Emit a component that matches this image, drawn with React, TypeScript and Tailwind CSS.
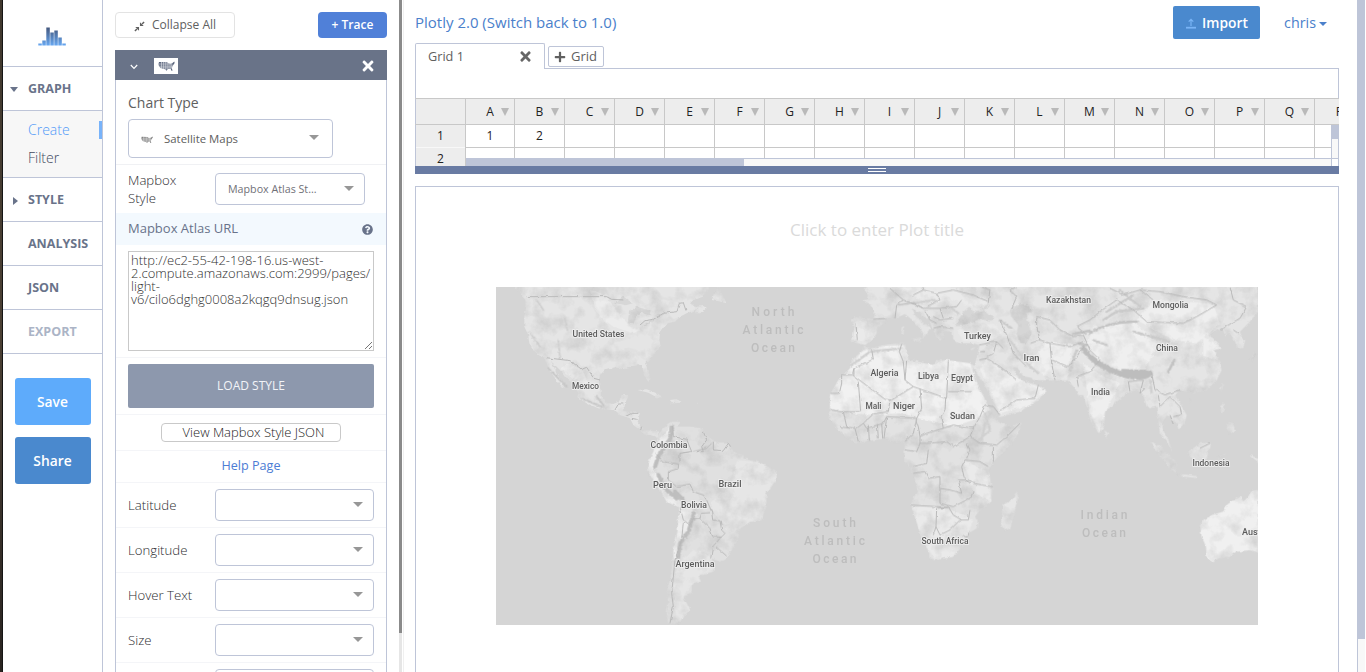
import React from "react";
import { FaPlus, FaTimes, FaQuestionCircle } from "react-icons/fa";

const line = "border-[#bec5d8]";

function UsaIcon({ className, color }: { className: string; color: string }) {
  return (
    <svg viewBox="0 0 48 30" className={className}>
      <path
        d="M3 2L26 3L29 6L35 7L41 5L46 1L47 5L42 12L39 19L41 27L38 27L36 22L28 22L24 27L20 23L8 20L3 14L1 8Z"
        fill={color}
      />
      <path d="M0 8H38M0 14H42M4 19H40M10 0V22M16 0V24M22 0V26M28 2V24M34 6V23M39 4V20" stroke="#fff" strokeWidth="1.9" opacity=".8" />
    </svg>
  );
}

function Caret({ className = "" }: { className?: string }) {
  return <span className={`h-0 w-0 shrink-0 border-x-[5px] border-t-[5px] border-x-transparent border-t-[#979797] ${className}`} />;
}

function NavRow({ label, arrow, muted }: { label: string; arrow?: "down" | "right"; muted?: boolean }) {
  return (
    <div className={`flex h-[44px] shrink-0 items-center border-b pt-[2px] ${line}`}>
      <span className="flex w-[25px] items-center pl-[7px]">
        {arrow === "down" && <i className="mb-px h-0 w-0 border-x-[4px] border-t-[5px] border-x-transparent border-t-[#69738a]" />}
        {arrow === "right" && <i className="ml-[3px] h-0 w-0 border-y-[4px] border-l-[5px] border-y-transparent border-l-[#69738a]" />}
      </span>
      <span className={`text-[12.5px] font-bold ${muted ? "text-[#abb4c6]" : "text-[#69738a]"}`}>{label}</span>
    </div>
  );
}

function Sidebar() {
  const bars = [2, 5, 18, 13, 15, 8, 2];
  return (
    <nav className={`flex w-[100px] shrink-0 flex-col border-r bg-white ${line}`}>
      <div className={`flex h-[67px] shrink-0 justify-center border-b pr-px pt-[27px] ${line}`}>
        <svg className="h-[19px] w-[28px]" viewBox="0 0 28 19">
          <defs>
            <linearGradient id="logo" gradientUnits="userSpaceOnUse" x1="0" y1="0" x2="0" y2="19">
              <stop offset="0" stopColor="#43557a" />
              <stop offset="1" stopColor="#68aaf5" />
            </linearGradient>
          </defs>
          {bars.map((h, i) => (
            <rect key={i} x={i * 4 + 0.3} y={18.5 - h} width="3.5" height={h} fill="url(#logo)" />
          ))}
        </svg>
      </div>
      <NavRow label="GRAPH" arrow="down" />
      <div className={`h-[67px] shrink-0 border-b bg-[#f7f7f7] pt-[9px] text-[14px] ${line}`}>
        <div className="flex h-[20px] items-center justify-between pl-[25px]">
          <span className="mb-[2px] font-light text-[#4f99f8]">Create</span>
          <i className="h-[18px] w-[3px] bg-[#78b3fa]" />
        </div>
        <div className="mt-[7px] flex h-[20px] items-center pl-[25px] font-light text-[#414a5e]">Filter</div>
      </div>
      <NavRow label="STYLE" arrow="right" />
      <NavRow label="ANALYSIS" />
      <NavRow label="JSON" />
      <NavRow label="EXPORT" muted />
      <div className="flex flex-col gap-3 pl-3 pr-[11px] pt-6 text-[13.8px] font-semibold text-white">
        <button className="h-[47px] rounded-[3px] bg-[#5eabfb] pr-px pt-[2px]">Save</button>
        <button className="h-[47px] rounded-[3px] bg-[#4a89ce] pr-px pt-[2px]">Share</button>
      </div>
    </nav>
  );
}

function FieldRow({ label }: { label: string }) {
  return (
    <div className="flex h-[45px] shrink-0 items-center border-b border-[#f4f5f8] pl-3 pr-3">
      <span className="w-[87px] pt-[2px] text-[13.2px] font-light text-[#2c2c31]">{label}</span>
      <div className={`flex h-[32px] flex-1 items-center justify-end rounded-[4px] border pr-[10px] ${line}`}>
        <Caret className="mb-[2px]" />
      </div>
    </div>
  );
}

function TracePanel() {
  return (
    <div className="flex h-full w-[296px] shrink-0 flex-col overflow-hidden pl-3 pr-[12px] pt-3">
      <div className="flex w-[272px] shrink-0 justify-between">
        <button className="flex h-[26px] w-[120px] items-center gap-[7px] rounded-[4px] border border-[#e3e3e3] pl-[18px] text-[12px] text-[#606060]">
          <svg viewBox="0 0 12 12" className="mt-[2px] h-[11px] w-[11px]" fill="#606060" stroke="#606060">
            <path d="M1 11L3.2 8.8M11 1L8.8 3.2" strokeWidth="1.6" />
            <path d="M1.4 6.5H5.5V10.6ZM10.6 5.5H6.5V1.4Z" stroke="none" />
          </svg>
          Collapse All
        </button>
        <button className="h-[26px] w-[69px] rounded-[4px] bg-[#5080d8] text-[12px] font-semibold text-white">+ Trace</button>
      </div>
      <div className="mt-3 flex h-[30px] w-[272px] shrink-0 items-center bg-[#697388] pl-[15px] pr-[11px]">
        <svg viewBox="0 0 8 6" className="mt-[4px] h-[6px] w-[8px]" fill="none" stroke="#fff" strokeWidth="1.2">
          <path d="M.8 1L4 4.4L7.2 1" />
        </svg>
        <span className="ml-[16px] mt-[2px] flex h-[16px] w-[24px] items-center justify-center bg-white">
          <UsaIcon className="h-[11px] w-[17px]" color="#59647c" />
        </span>
        <FaTimes className="ml-auto mt-[2px] h-[16px] w-[16px] text-white" />
      </div>
      <div className={`flex h-[600px] w-[272px] shrink-0 flex-col border-x ${line}`}>
        <div className="h-[85px] shrink-0 border-b border-[#f0f1f4] pl-3">
          <div className="pt-[13px] text-[14px] leading-[20px] text-[#606060]">Chart Type</div>
          <div className={`mt-[6px] flex h-[39px] w-[205px] items-center rounded-[4px] border pl-[12px] pr-[13px] text-[11.4px] text-[#606060] ${line}`}>
            <UsaIcon className="mt-[2px] h-[8px] w-[12px]" color="#777" />
            <span className="ml-[11px] mt-px">Satellite Maps</span>
            <Caret className="mb-[3px] ml-auto" />
          </div>
        </div>
        <div className="flex h-[48px] shrink-0 items-center pl-3">
          <span className="w-[87px] text-[13.2px] font-light leading-[18px] text-[#2c2c31]">Mapbox<br />Style</span>
          <div className={`flex h-[32px] w-[150px] items-center rounded-[4px] border pl-3 pr-[10px] text-[10.7px] text-[#707077] ${line}`}>
            Mapbox Atlas St...
            <Caret className="mb-px ml-auto" />
          </div>
        </div>
        <div className="flex h-[32px] shrink-0 items-center justify-between bg-[#f3f9fe] pl-3 pr-[13px] text-[13px] text-[#69738a]">
          Mapbox Atlas URL
          <FaQuestionCircle className="mt-px h-[11px] w-[11px]" />
        </div>
        <div className="h-[113px] shrink-0 border-b border-[#f4f5f8] px-3 pt-[6px]">
          <div className="relative h-[100px] border border-[#c9c9c9] px-[2px] pt-[2px] text-[13px] font-light leading-[13px] text-[#303030]">
            http://ec2-55-42-198-16.us-west-<br />
            2.compute.amazonaws.com:2999/pages/<br />
            light-<br />
            v6/cilo6dghg0008a2kqgq9dnsug.json
            <svg className="absolute bottom-0 right-0 h-[9px] w-[9px]" viewBox="0 0 9 9" stroke="#666" strokeWidth=".9">
              <path d="M1 8L8 1M5 8L8 5" />
            </svg>
          </div>
        </div>
        <div className="h-[57px] shrink-0 border-b border-[#f4f5f8] px-3 pt-[6px]">
          <button className="h-[44px] w-full rounded-[2px] bg-[#8d98ad] text-[12px] text-[#f2f4f8]">LOAD STYLE</button>
        </div>
        <div className="flex h-[36px] shrink-0 items-center justify-center border-b border-[#f4f5f8]">
          <button className="h-[19px] w-[180px] rounded-[4px] border border-[#c9c9c9] pl-[5px] text-[13px] font-light leading-[17px] text-[#222]">
            View Mapbox Style JSON
          </button>
        </div>
        <div className="flex h-[32px] shrink-0 items-center justify-center border-b border-[#f4f5f8] text-[12.6px] text-[#4c7cd4]">Help Page</div>
        <FieldRow label="Latitude" />
        <FieldRow label="Longitude" />
        <FieldRow label="Hover Text" />
        <FieldRow label="Size" />
        <FieldRow label="" />
      </div>
    </div>
  );
}

const columns = "ABCDEFGHIJKLMNOPQR".split("");

function DataGrid() {
  return (
    <section className="shrink-0">
      <div className="flex h-[26px] items-end">
        <div className={`flex h-[26px] w-[130px] items-center justify-between rounded-t-[2px] border-x border-t pl-3 pr-[11px] text-[12.7px] text-[#606060] ${line}`}>
          <span className="mt-px">Grid 1</span>
          <FaTimes className="h-[15px] w-[15px] text-[#666]" />
        </div>
        <div className={`flex h-full flex-1 border-b pl-[3px] pt-[3px] ${line}`}>
          <div className={`flex h-[21px] w-[56px] items-center gap-[5px] rounded-[2px] border pl-[5px] text-[13px] text-[#606060] ${line}`}>
            <FaPlus className="h-[12px] w-[12px]" />
            Grid
          </div>
        </div>
      </div>
      <div className={`h-[29px] border-x ${line}`} />
      <div className="flex h-[27px] overflow-hidden border-y border-[#c8c8c8] bg-[#ededed] text-[12px] text-[#222]">
        <span className={`w-[51px] shrink-0 border-l border-r border-r-[#c8c8c8] border-l-[#bec5d8]`} />
        {columns.map((c, i) => (
          <span key={c} className={`relative flex shrink-0 items-center justify-center border-r border-[#c8c8c8] ${i === 0 ? "w-[49px]" : "w-[50px]"}`}>
            {c}
            <i className="absolute right-[5px] top-[9px] h-0 w-0 border-x-[4px] border-t-[8px] border-x-transparent border-t-[#b9b9b9]" />
          </span>
        ))}
      </div>
      <div className={`flex h-[41px] border-x text-[12px] text-[#222] ${line}`}>
        <div className="flex w-[50px] shrink-0 flex-col border-r border-[#c8c8c8] bg-[#ededed] text-center">
          <span className="h-[23px] border-b border-[#f8f8f8] leading-[22px]">1</span>
          <span className="h-[18px] overflow-hidden leading-[22px]">2</span>
        </div>
        <div className="flex min-w-0 flex-1 flex-col overflow-hidden">
          <div className="flex h-[23px] shrink-0 border-b border-[#c8c8c8]">
            {columns.map((c, i) => (
              <span key={c} className={`shrink-0 border-r border-[#c8c8c8] text-center leading-[22px] ${i === 0 ? "w-[49px]" : "w-[50px]"}`}>
                {i === 0 ? "1" : i === 1 ? "2" : ""}
              </span>
            ))}
          </div>
          <div className="flex h-[10px] shrink-0">
            {columns.map((c, i) => (
              <span key={c} className={`shrink-0 border-r border-[#c8c8c8] ${i === 0 ? "w-[49px]" : "w-[50px]"}`} />
            ))}
          </div>
          <div className={`h-[8px] border-t bg-[#f8f8f8] ${line}`}>
            <div className="h-[7px] w-[278px] bg-[#bec5d8]" />
          </div>
        </div>
        <div className={`flex w-[7px] shrink-0 flex-col border-l bg-[#f8f8f8] ${line}`}>
          <div className="h-[14px] bg-[#bec5d8]" />
          <div className={`h-[20px] border-b ${line}`} />
          <div className="flex-1 bg-white" />
        </div>
      </div>
      <div className="flex h-[8px] flex-col items-center justify-center gap-[2px] bg-[#697ba3]">
        <i className="h-px w-[18px] bg-white" />
        <i className="h-px w-[18px] bg-white" />
      </div>
    </section>
  );
}

const labels: [string, number, number, number][] = [
  ["United States", 598.5, 337, 52],
  ["Mexico", 585.5, 389, 27],
  ["Colombia", 669, 448, 37],
  ["Peru", 662.5, 488, 19],
  ["Brazil", 730, 486.5, 23],
  ["Bolivia", 694, 508, 26],
  ["Argentina", 695, 567, 39],
  ["Algeria", 884.5, 376, 28],
  ["Libya", 928.5, 379, 21],
  ["Egypt", 962, 381, 22],
  ["Mali", 873.5, 409, 16],
  ["Niger", 904, 409, 22],
  ["Sudan", 962.5, 419.3, 25],
  ["Turkey", 977.5, 338.5, 27],
  ["Iran", 1031.5, 361, 16],
  ["Kazakhstan", 1068.5, 302.5, 45],
  ["Mongolia", 1170.5, 308, 36],
  ["China", 1167, 351, 22],
  ["India", 1100.5, 394.5, 19],
  ["Indonesia", 1211, 466, 37],
  ["South Africa", 945, 543.5, 47],
  ["Australia", 1260, 535, 36],
];

const oceans: [string, number, number, number][] = [
  ["North", 773, 315.5, 43],
  ["Atlantic", 773, 333.5, 61],
  ["Ocean", 773, 351.5, 44],
  ["South", 834.5, 527, 43],
  ["Atlantic", 834.5, 545, 61],
  ["Ocean", 834.5, 563, 44],
  ["Indian", 1104, 519, 47],
  ["Ocean", 1104, 537, 44],
];

function WorldMap() {
  return (
    <svg className="block h-[338px] w-[762px] bg-[#d5d5d5]" viewBox="496 287 762 338">
      <defs>
        <filter id="coast" x="-5%" y="-5%" width="110%" height="110%" colorInterpolationFilters="sRGB">
          <feTurbulence type="fractalNoise" baseFrequency=".22" numOctaves="2" seed="4" result="n" />
          <feDisplacementMap in="SourceGraphic" in2="n" scale="3.5" xChannelSelector="R" yChannelSelector="G" result="land" />
          <feTurbulence type="fractalNoise" baseFrequency=".06" numOctaves="4" seed="12" />
          <feColorMatrix values="0 0 0 0 .4  0 0 0 0 .4  0 0 0 0 .4  .4 0 0 0 -.17" />
          <feComposite in2="land" operator="in" result="shade" />
          <feMerge>
            <feMergeNode in="land" />
            <feMergeNode in="shade" />
          </feMerge>
        </filter>
        <filter id="borders" x="-5%" y="-5%" width="110%" height="110%" colorInterpolationFilters="sRGB">
          <feTurbulence type="fractalNoise" baseFrequency=".2" numOctaves="1" seed="4" result="n" />
          <feDisplacementMap in="SourceGraphic" in2="n" scale="3" xChannelSelector="R" yChannelSelector="G" />
        </filter>
        <filter id="soft" x="-20%" y="-20%" width="140%" height="140%">
          <feGaussianBlur stdDeviation="2" />
        </filter>
        <filter id="relief" x="-10%" y="-10%" width="120%" height="120%" colorInterpolationFilters="sRGB">
          <feTurbulence type="fractalNoise" baseFrequency=".18" numOctaves="2" seed="9" result="n" />
          <feDisplacementMap in="SourceGraphic" in2="n" scale="9" xChannelSelector="R" yChannelSelector="G" />
        </filter>
      </defs>

      <g filter="url(#coast)">
        <g transform="translate(490 280) scale(.33333)" fill="#e5e5e5">
          <path d="M66 10L85 35L105 55L108 85L103 110L103 140L115 165L118 190L135 215L160 230L170 250L180 275L200 300L215 320L224 324L215 305L200 280L190 255L182 243L195 255L215 275L235 300L250 310L265 340L262 352L290 370L325 385L345 390L375 390L390 405L420 415L430 435L450 450L462 460L480 465L500 470L508 455L485 452L460 450L448 435L440 425L450 400L425 397L403 393L400 375L410 360L417 345L395 345L385 365L370 372L350 370L335 345L328 315L327 300L330 285L345 270L375 262L400 268L425 258L455 255L460 270L462 285L475 305L480 290L475 270L465 250L480 235L500 215L512 200L508 180L510 160L520 145L530 130L555 125L570 110L590 100L610 93L625 83L615 100L630 100L650 85L640 78L615 80L600 70L610 60L635 50L655 30L658 10Z" />
          <path d="M665 60L672 40L685 12L700 50L710 70L690 65ZM443 330L470 328L500 340L520 352L500 352L475 338ZM540 360L560 358L578 368L545 370ZM617 368L625 369L620 372Z" />
          <path d="M300 30L350 45L370 80L420 140L450 150L430 160L370 140L330 110L310 70ZM210 265L240 250L280 275L300 320L280 310L240 290Z" fill="#ececec" />
          <path d="M373 68L400 50L428 70L408 76ZM430 132L413 130L417 95L440 80L482 92L478 106L452 98L440 108ZM455 138L490 117L494 122L465 136ZM495 110L525 98L520 106Z" fill="#d7d7d7" />
        </g>
        <g transform="translate(490 450) scale(.33333)" fill="#e0e0e0">
          <path d="M470 60L478 25L487 10L497 -20L505 -45L520 -65L545 -84L568 -85L562 -70L600 -70L635 -65L650 -45L680 -20L715 -20L730 5L760 15L760 25L800 35L835 50L858 65L860 85L845 110L828 130L828 170L815 210L780 215L750 235L745 265L725 300L705 330L690 335L665 325L675 350L670 365L640 375L625 375L632 395L605 405L605 430L580 440L590 465L600 480L580 495L565 530L535 530L530 490L535 460L530 420L540 390L545 350L550 300L565 250L565 200L570 170L540 155L510 125L495 95L475 75Z" />
          <path d="M740 30L800 35L858 65L860 85L828 130L828 170L815 210L780 215L750 235L720 250L700 220L670 190L660 160L700 130L730 90ZM610 300L660 320L675 360L625 375L632 395L605 405L580 440L600 480L560 520L550 420L560 340Z" fill="#e6e6e6" />
          <path d="M470 60L482 25L500 -20L540 -70L530 -30L500 20L490 60L520 110L575 150L620 190L600 240L570 290L555 340L550 300L562 250L565 200L568 172L530 155L495 95Z" fill="#eeeeee" />
        </g>
        <g transform="translate(740 280) scale(.33333)" fill="#e2e2e2">
          <path d="M368 200L390 205L430 195L480 190L495 190L500 215L498 235L530 240L555 255L580 255L590 240L620 240L655 248L690 250L705 258L695 275L710 310L730 345L745 380L765 405L780 430L810 437L845 428L840 450L820 485L795 512L760 545L745 570L755 620L755 665L720 690L705 710L713 725L710 745L685 760L675 790L640 830L585 840L568 835L568 820L545 775L535 725L512 675L532 630L520 580L492 540L495 505L490 485L465 490L440 475L400 480L350 490L310 465L285 435L265 405L275 385L270 345L295 300L330 265L335 240L365 215Z" />
          <path d="M365 215L430 200L495 195L505 240L580 255L620 240L690 250L715 320L750 390L700 420L640 440L560 420L480 400L400 405L330 400L270 385L270 345L295 300L330 265Z" fill="#f1f1f1" />
          <path d="M515 680L590 680L640 690L700 720L685 760L640 830L585 840L545 775ZM670 540L740 575L755 665L700 640Z" fill="#eaeaea" />
          <path d="M830 633L835 650L825 690L810 745L795 752L783 735L788 675L815 660Z" fill="#e7e7e7" />
          <path d="M366 62L385 58L382 40L372 28L395 10L1554 10L1554 95L1525 130L1495 160L1515 180L1510 205L1495 205L1480 175L1470 160L1455 165L1450 150L1435 148L1405 165L1420 175L1445 205L1420 210L1435 240L1445 270L1430 300L1400 330L1360 340L1320 330L1305 345L1320 370L1340 405L1335 425L1315 450L1310 430L1280 405L1265 430L1270 450L1285 480L1295 515L1280 480L1260 460L1255 420L1250 380L1230 385L1220 380L1210 345L1190 330L1165 335L1125 370L1095 395L1092 440L1078 460L1055 430L1040 380L1030 345L1015 345L1005 325L985 302L940 302L895 300L870 293L850 288L832 262L818 262L830 285L850 303L885 312L918 330L900 357L870 375L840 395L780 412L765 375L745 335L725 300L703 265L708 240L715 215L718 195L700 190L660 190L640 178L638 155L608 152L612 172L600 182L588 170L578 145L565 120L540 98L515 85L525 105L545 125L572 142L560 160L548 178L550 160L540 145L515 118L495 102L465 115L440 115L435 127L410 145L410 160L395 180L375 195L355 190L335 185L345 140L335 120L345 112L400 118L405 100L395 75Z" fill="#e5e5e5" />
          <path d="M510 176L543 176L538 188ZM485 142L492 138L491 165L484 162ZM620 205L640 207M690 207L708 202L695 211Z" />
          <path d="M790 270L850 303L918 330L870 375L780 400L750 330L720 270L740 235ZM910 190L1000 190L980 300L940 300L870 260ZM1060 140L1180 125L1260 190L1210 270L1100 270L1040 200ZM1030 250L1090 290L1140 310L1095 395L1078 455L1050 400ZM1240 60L1420 70L1440 130L1370 190L1300 180L1190 120ZM1390 170L1445 205L1420 210L1435 240L1390 230Z" fill="#efefef" />
          <path d="M480 25L640 10L720 30L750 70L690 80L640 60L560 70ZM345 120L400 130L380 185L340 180ZM650 150L760 130L790 160L750 185L670 185Z" fill="#eaeaea" />
          <path d="M645 138L655 120L668 98L688 80L700 95L720 96L735 88L740 100L762 112L755 122L715 118L690 132L665 138ZM720 90L738 75L750 72L738 88ZM815 85L840 72L870 75L876 95L860 100L865 130L875 160L860 190L840 190L830 160L835 135L815 110L810 95Z" fill="#d6d6d6" />
          <path d="M1093 450L1105 460L1100 473ZM1345 360L1356 355L1350 368ZM1440 328L1450 310L1446 330ZM1440 380L1450 370L1455 390L1445 400ZM1465 425L1480 430L1485 450L1470 465L1460 445ZM1525 240L1540 225L1545 218L1550 223L1535 245Z" />
          <path d="M1230 485L1255 495L1280 520L1310 550L1310 580L1285 560L1260 525ZM1310 580L1370 588L1370 594L1315 588ZM1345 515L1380 490L1410 488L1405 520L1400 540L1370 545L1350 530ZM1435 525L1460 522L1440 530L1450 545L1440 560L1434 545ZM1530 525L1560 535L1555 550Z" fill="#e4e4e4" />
          <path d="M1554 630L1530 635L1525 650L1510 665L1500 650L1480 660L1460 675L1450 695L1415 705L1390 720L1380 735L1385 770L1398 800L1400 835L1415 845L1435 835L1470 830L1490 815L1530 810L1560 820Z" fill="#f0f0f0" />
        </g>
      </g>

      <g transform="translate(740 280) scale(.33333)" filter="url(#relief)" fill="none" strokeLinecap="round">
        <g filter="url(#soft)">
          <path d="M1030 205Q1060 250 1130 277T1230 280M1150 275L1215 278" stroke="#bdbdbd" strokeWidth="16" />
          <path d="M1050 160Q1100 125 1190 125M1000 162L1050 152M1285 275L1303 240M1015 190L1040 195" stroke="#c3c3c3" strokeWidth="8" />
          <path d="M1090 120L1130 95L1210 85M1100 95L1180 45M1180 155L1290 185M1060 180L1100 195M780 120L815 145M990 270L1010 210M1140 30L1200 80" stroke="#cacaca" strokeWidth="7" />
          <path d="M810 180L860 250L895 280M735 400L750 450L715 480M735 430L725 480M335 255L390 215L485 205M520 70L585 60M635 85L655 100M1230 300L1235 340" stroke="#d0d0d0" strokeWidth="7" />
          <path d="M-525 115L-518 150M-632 155L-600 200M-545 180L-540 235M-610 60L-590 90" stroke="#cecece" strokeWidth="5" />
          <path d="M-575 265L-520 320M-475 355L-415 380M-430 350L-410 375" stroke="#c8c8c8" strokeWidth="6" />
          <path d="M-205 440L-208 475L-245 530L-255 560M-245 585L-225 625L-190 655M-195 635L-170 660M-138 700L-155 755L-180 790L-185 830" stroke="#bebebe" strokeWidth="12" />
        </g>
      </g>

      <g filter="url(#borders)" fill="none" stroke="#b7b7b7" strokeWidth="2.8" strokeLinejoin="round">
        <g transform="translate(490 280) scale(.33333)">
          <path d="M110 50H350L365 58L400 60M450 135L465 122L490 118L520 100L560 95L568 70L580 68L588 92M168 233L240 242L275 268L290 262L312 295L330 300M375 390L385 372L400 372M405 410L425 400L445 400M425 415L440 418M452 450L455 440" />
          <path d="M547 430L550 470L590 478L605 515L570 520L570 545M640 455L650 480L635 500L640 515L610 515M670 485L670 510L700 512L715 490L722 500" />
        </g>
        <g transform="translate(490 450) scale(.33333)">
          <path d="M497 10L520 35L565 42L565 55L535 65L535 90L560 110L600 102L610 125L640 135L650 150L665 185L668 210L690 212L695 240L705 250L690 265L668 290L662 325M570 170L580 210L600 225L610 205L630 205L635 190L660 188M630 205L660 235L668 260L695 262M678 290L710 318M580 215L575 270L555 330L550 380L545 430L550 470L540 520M610 5L650 -5L665 -20" />
        </g>
        <g transform="translate(740 280) scale(.33333)">
          <path d="M395 208L400 238L342 265L338 285L435 358L455 360L520 320L495 300L490 245L478 215L485 192M500 240L495 300M520 320L620 355L625 240M625 335H695M340 285H305V310L298 340H272M342 265V285M355 305L362 395L300 395L275 390M450 360L445 395L400 402L370 430L380 445L430 430L440 410L530 415L545 385L540 325M440 412L432 475M530 415L520 460L495 485M617 355L615 390L603 410L610 445L560 460L540 470L535 440L528 420M610 445L640 435L700 445L720 410L735 375L760 380L780 405M700 445L690 470L720 490L770 495L800 470L840 430M690 470L640 500L620 485L560 490L540 490L540 470M310 395L320 440L345 445L355 485M370 430L350 445M385 435L388 482M412 432L415 475M425 432L428 475M300 440L330 445M495 510L530 515L540 490M520 580L555 575L565 595L600 590L600 625L630 630L665 640L655 600L685 600L700 610L755 620M600 625V670L640 680L690 655L700 635M512 675L625 682L590 685L588 740L580 765M588 740L600 765L630 750L660 720L685 720L690 690M625 680L640 705L665 720M675 540L665 560L672 590L690 610M675 540L720 545L745 560M565 510L560 550L520 560M680 490L690 510L680 535M760 500V545M680 755A8 8 0 1 1 670 765M640 790L655 780" />
          <path d="M440 115L400 118M348 130L352 180M465 115L470 75L490 60L450 25M490 60L530 75L550 85L600 85L650 80L665 60M520 45L550 30L590 40L600 60L560 80M550 30L545 21M590 40L640 30L700 45L745 65L750 30L725 21M580 110L600 120L640 115M555 92L570 120L590 130M580 145L600 140L640 145M600 85L610 115M475 75L520 68L550 85M718 195L770 185L790 205M718 240L740 235L780 260L830 300M718 215L735 215M770 185L760 220L735 235M780 392L830 360L885 355L895 315M780 120L800 165L820 220L860 260M872 190L900 180L930 190L935 250L945 300M900 180L890 140V110L930 120L960 150L1000 170L1030 165L1050 210L1080 240L1050 275L1010 290L1015 320M930 190L990 200L1030 185M935 240L985 260L1010 230L1030 200M815 85L830 50L810 30L830 21M1110 25L1150 45L1200 30L1240 60M1200 30L1260 35L1330 50L1400 60L1430 75L1370 110L1330 130L1220 125L1180 90L1130 60L1080 95L1050 120L1010 140L1040 165M1165 305L1170 335M1165 305L1210 300L1200 340L1215 325M1235 280L1245 330L1275 345L1320 330M1255 345L1260 380L1290 350L1320 380L1325 405L1300 410M1290 405L1300 430M1380 505L1410 490M1440 150L1500 115L1520 80L1480 60L1470 21M1495 160L1480 150" />
        </g>
      </g>

      <g fontFamily="'Roboto', sans-serif" textAnchor="middle">
        {oceans.map(([t, x, y, w], i) => (
          <text key={i} x={x} y={y} fontSize="12" fontWeight="500" fill="#bdbdbd" textLength={w}>{t}</text>
        ))}
        {labels.map(([t, x, y, w]) => (
          <text key={t} x={x} y={y} fontSize="9.3" fontWeight="500" fill="#5c5c5c" stroke="#ededed" strokeWidth="2" strokeLinejoin="round" paintOrder="stroke" textLength={w} lengthAdjust="spacingAndGlyphs">{t}</text>
        ))}
      </g>
    </svg>
  );
}

export default function App() {
  return (
    <div className="flex h-[672px] w-[1366px] overflow-hidden bg-white font-['Open_Sans',sans-serif]">
      <div className="w-[3px] shrink-0 border-r border-[#151515] bg-linear-to-b from-[#40382e] via-[#4b4034] to-[#292421]" />
      <Sidebar />
      <TracePanel />
      <div className="w-[3px] shrink-0 bg-[#e6e6e6]">
        <div className="h-[633px] bg-[#8b8b8b]" />
      </div>
      <main className="ml-[1px] flex min-w-0 flex-1 flex-col border-l border-[#f0f0f0] pl-[11px] pr-[18px]">
        <header className="flex h-[43px] shrink-0 items-start justify-between pt-[6px] text-[#4a80cb]">
          <span className="pt-[6px] text-[15px] leading-[20px]">Plotly 2.0 (Switch back to 1.0)</span>
          <div className="flex items-center pr-[12px]">
            <button className="flex h-[33px] w-[87px] items-center rounded-[2px] bg-[#4a89ce] pl-[13px] text-[13.8px] font-semibold text-white">
              <svg viewBox="0 0 10 11" className="mr-[6px] mt-[2px] h-[11px] w-[10px]" stroke="#79b4f6" fill="none">
                <path d="M5 8V1.5M2.7 3.6L5 1.3L7.3 3.6" strokeWidth="1.2" />
                <path d="M0 9.7H10" strokeWidth="1.8" />
              </svg>
              <span className="mt-[2px]">Import</span>
            </button>
            <span className="ml-[24px] text-[14.3px]">chris</span>
            <i className="ml-[3px] mt-[2px] h-0 w-0 border-x-[4px] border-t-[4px] border-x-transparent border-t-[#4a80cb]" />
          </div>
        </header>
        <DataGrid />
        <section className={`mt-3 flex flex-1 flex-col border-x border-t ${line}`}>
          <h1 className="pt-[31px] text-center text-[17px] leading-[24px] text-[#dadada]">Click to enter Plot title</h1>
          <div className="mt-[45px] pl-20">
            <WorldMap />
          </div>
        </section>
      </main>
      <div className={`mr-[1px] w-[8px] shrink-0 border-l bg-[#f8f8f8] ${line}`}>
        <div className="h-[639px] bg-[#bec5d8]" />
      </div>
    </div>
  );
}
